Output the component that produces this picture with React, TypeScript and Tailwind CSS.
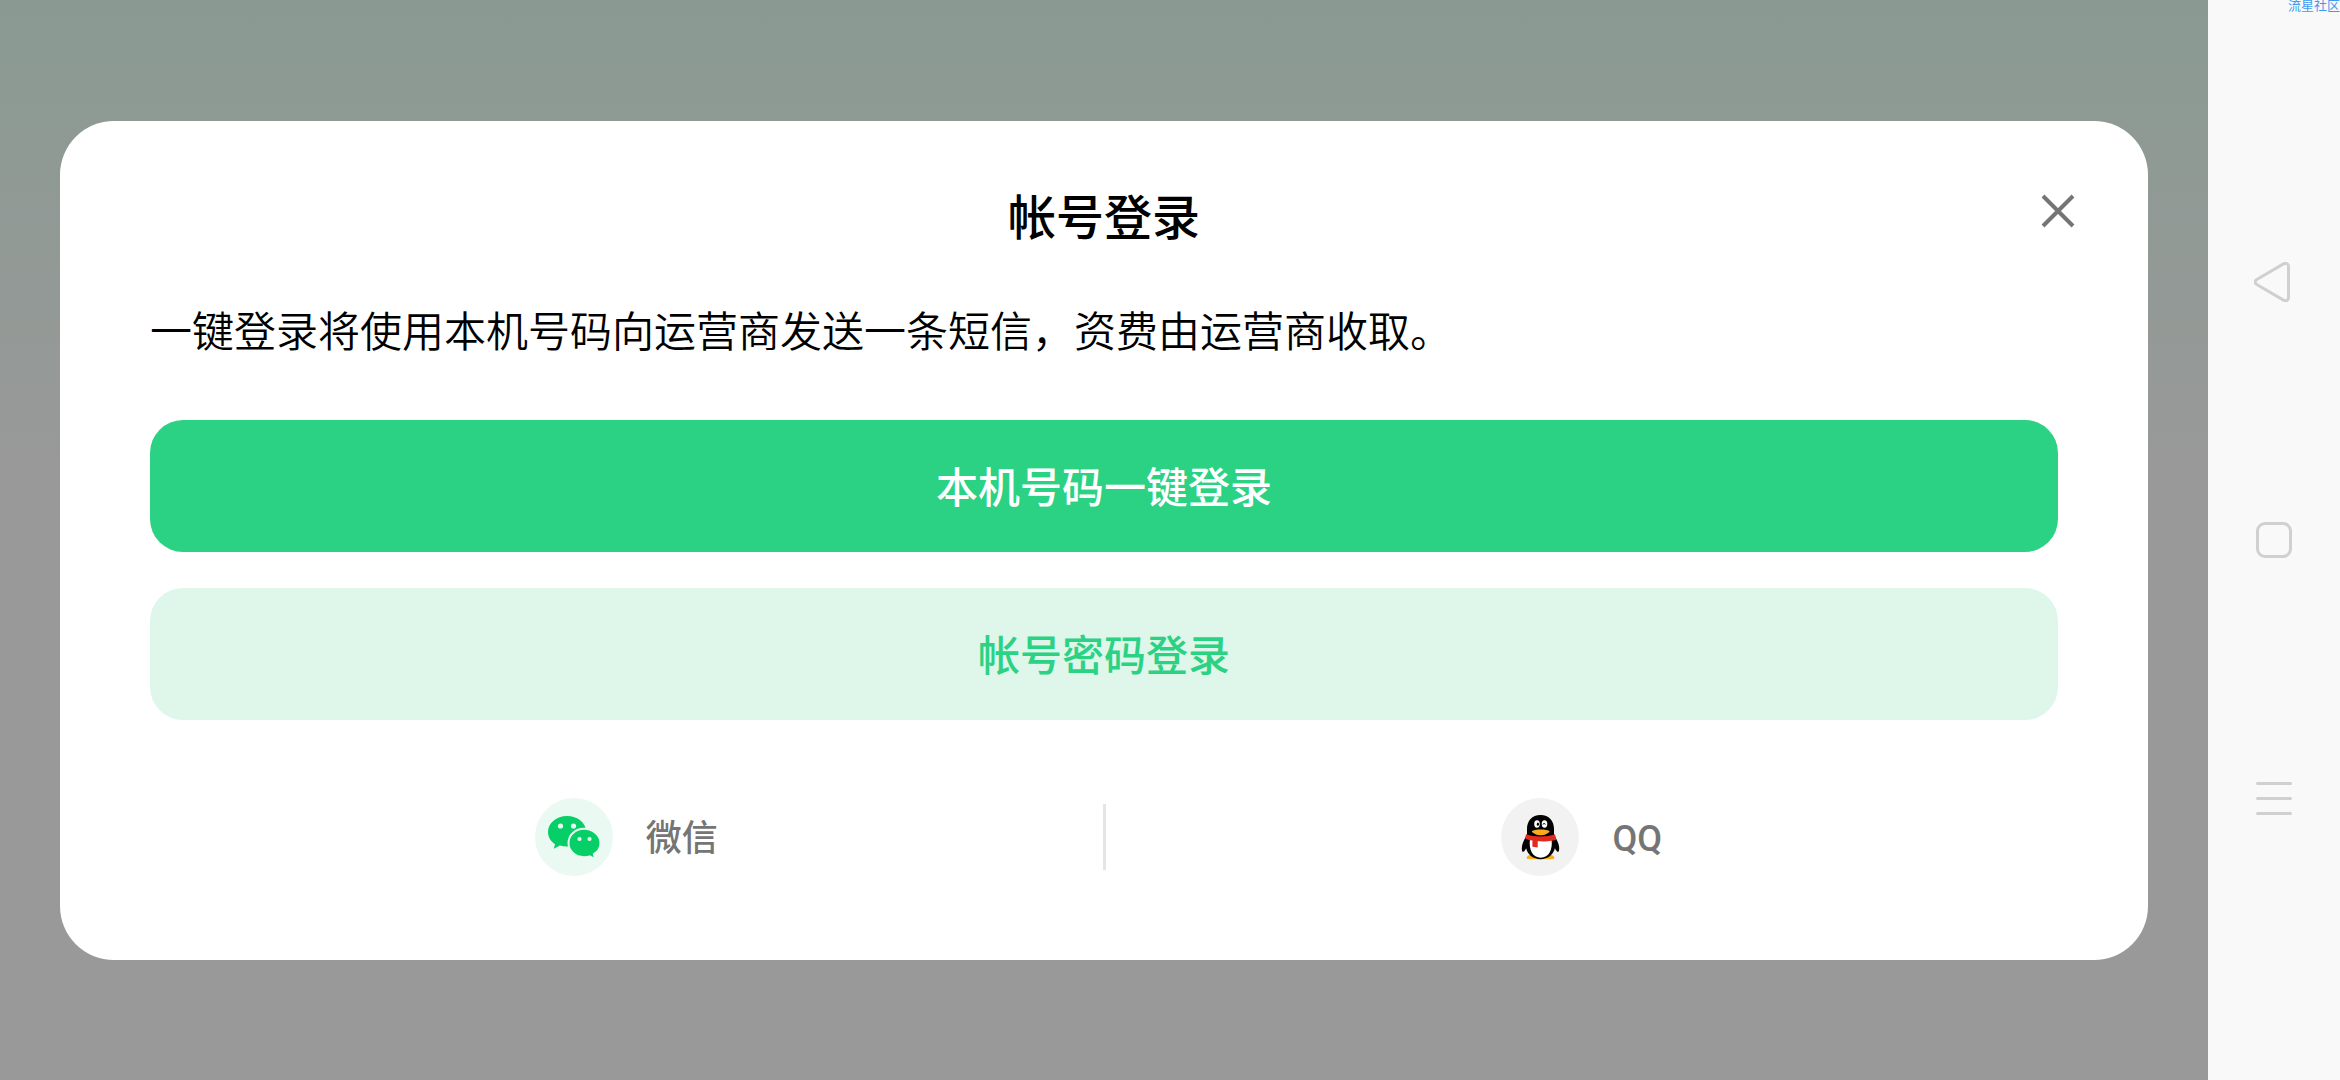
import type { ReactNode } from "react";

function WechatIcon() {
  return (
    <svg viewBox="0 0 78 78" className="size-full" aria-hidden="true">
      <path
        fill="#07cf67"
        d="M32 18C21.500 18 13 25 13 34c0 5 2.700 9.300 7 12.300L18.800 50.800l6.200-3.300c2.200.7 4.500 1 7 1 10.500 0 19-6.600 19-15.200S42.500 18 32 18z"
      />
      <path
        fill="#07cf67"
        stroke="#eaf9f2"
        strokeWidth="2"
        d="M49 30.800c-8.800 0-15.500 6.200-15.500 14.200S40.200 59.200 49 59.200c2 0 4-.3 5.800-.8l5.400 3-1.300-5.200c4-2.500 6.600-6.600 6.600-11.200 0-8-7.700-14.200-16.500-14.200z"
      />
      <circle cx="25.500" cy="28" r="2.600" fill="#eaf9f2" />
      <circle cx="38.500" cy="28" r="2.600" fill="#eaf9f2" />
      <circle cx="44.500" cy="41" r="2.100" fill="#eaf9f2" />
      <circle cx="54.500" cy="41" r="2.100" fill="#eaf9f2" />
    </svg>
  );
}

function QQIcon() {
  return (
    <svg viewBox="0 0 78 78" className="size-full" aria-hidden="true">
      <path fill="#fcac1a" d="M30 56.500c-3 .8-5 2.500-4 4 .4.600 2 .8 6 .8h14.500c4 0 6.200-.2 6.600-.8 1-1.500-1-3.200-4-4z" />
      <path
        fill="#000"
        d="M39.500 17C31 17 26 23 26 31v5.500c-1.600 3.500-5.200 8.500-5.200 13.500 0 2.200.4 3.800 1.100 3.900.9.100 2.300-1.600 3.200-3.600 1.600 6.500 7.200 10.900 14.400 10.900s12.800-4.400 14.400-10.900c.9 2 2.300 3.700 3.200 3.600.7-.1 1.100-1.700 1.100-3.900 0-5-3.600-10-5.200-13.500V31c0-8-5-14-13.500-14z"
      />
      <path fill="#fff" d="M29 41h21.500c1.500 11-2.800 18.700-10.800 18.700S27.500 52 29 41z" />
      <path fill="#e02a20" d="M25 36.300c9 3 20 3 29 0l1.200 5.400c-5 1.700-13 2-18.500 1.600V49.500l-5.300-.7V42.600c-3-.3-5.600-1-7.200-2z" />
      <ellipse cx="36" cy="26" rx="2.800" ry="3.700" fill="#fff" />
      <ellipse cx="43.500" cy="26" rx="2.800" ry="3.700" fill="#fff" />
      <ellipse cx="36.900" cy="26.200" rx="1.100" ry="1.600" fill="#000" />
      <path d="M41.900 26.500c.4-1.400 2-1.400 2.400 0" fill="none" stroke="#000" />
      <path fill="#fcac1a" d="M30.700 33.200c2.500-2.200 15.500-2.200 18 0-1.500 2.500-5.600 4-9 4s-7.500-1.500-9-4z" />
    </svg>
  );
}

type ProviderProps = {
  label: string;
  badge: string;
  children: ReactNode;
};

function Provider({ label, badge, children }: ProviderProps) {
  return (
    <div className="flex flex-1 justify-center">
      <button type="button" className="flex items-center gap-[33px]">
        <span className={`size-[78px] rounded-full ${badge}`}>{children}</span>
        <span className="pt-1 text-4xl font-medium text-[#757575]">{label}</span>
      </button>
    </div>
  );
}

// System navigation keys, shown on the side in landscape
function NavigationBar() {
  return (
    <nav className="relative flex w-[132px] shrink-0 flex-col items-center justify-center gap-[218px] bg-[#f9f9f9]">
      <span className="absolute top-0 right-0 text-[13px] leading-3 whitespace-nowrap text-[#3d9cf0]">
        流星社区
      </span>
      <button type="button" aria-label="返回">
        <svg viewBox="2 0 40 40" className="size-10" fill="none" stroke="#d0d0d0" strokeWidth="3" strokeLinejoin="round">
          <path d="M31.500 1.900 5.200 17.200c-2.800 1.600-2.800 4 0 5.600l26.300 15.300c2.600 1.400 5 .2 5-2.600v-31c0-2.800-2.400-4-5-2.600z" />
        </svg>
      </button>
      <button type="button" aria-label="主屏幕">
        <svg viewBox="0 0 40 40" className="size-10" fill="none" stroke="#d0d0d0" strokeWidth="3">
          <rect x="3.500" y="3.500" width="33" height="33" rx="7.500" />
        </svg>
      </button>
      <button type="button" aria-label="最近任务">
        <svg viewBox="0 0 40 40" className="size-10" stroke="#d0d0d0" strokeWidth="3" strokeLinecap="round">
          <path d="M3.500 5.500h33M3.500 20.500h33M3.500 35.500h33" />
        </svg>
      </button>
    </nav>
  );
}

export default function App() {
  return (
    <div className="flex min-h-screen font-[Roboto,'Noto_Sans_CJK_SC',sans-serif]">
      <main className="flex flex-1 items-center bg-linear-to-b from-[#8a9a92] to-[#999999] to-45% px-[60px] pt-px">
        <section
          role="dialog"
          aria-labelledby="login-title"
          className="relative w-full rounded-[54px] bg-white px-[90px] pt-[62px] pb-[84px]"
        >
          <h1 id="login-title" className="text-center text-5xl leading-[72px] font-medium text-black">
            帐号登录
          </h1>
          <button type="button" aria-label="关闭" className="absolute top-[72px] right-[72px]">
            <svg viewBox="0 0 36 36" className="size-9" stroke="#757575" strokeWidth="4">
              <path d="M3 3l30 30M33 3 3 33" />
            </svg>
          </button>

          <p className="mt-12 text-[42px] leading-[60px] font-[350] text-black">
            一键登录将使用本机号码向运营商发送一条短信，资费由运营商收取。
          </p>

          <div className="mt-[57px] flex flex-col gap-9">
            <button type="button" className="h-[132px] rounded-[33px] bg-[#2bd283] pt-1 text-[42px] font-medium text-white">
              本机号码一键登录
            </button>
            <button type="button" className="h-[132px] rounded-[33px] bg-[#def7ea] pt-1 text-[42px] font-medium text-[#2bd283]">
              帐号密码登录
            </button>
          </div>

          <div className="mt-[78px] flex items-center">
            <Provider label="微信" badge="bg-[#eaf9f2]">
              <WechatIcon />
            </Provider>
            <div className="h-[66px] w-[3px] bg-[#e5e5e5]" />
            <Provider label="QQ" badge="bg-[#f2f2f2]">
              <QQIcon />
            </Provider>
          </div>
        </section>
      </main>
      <NavigationBar />
    </div>
  );
}
